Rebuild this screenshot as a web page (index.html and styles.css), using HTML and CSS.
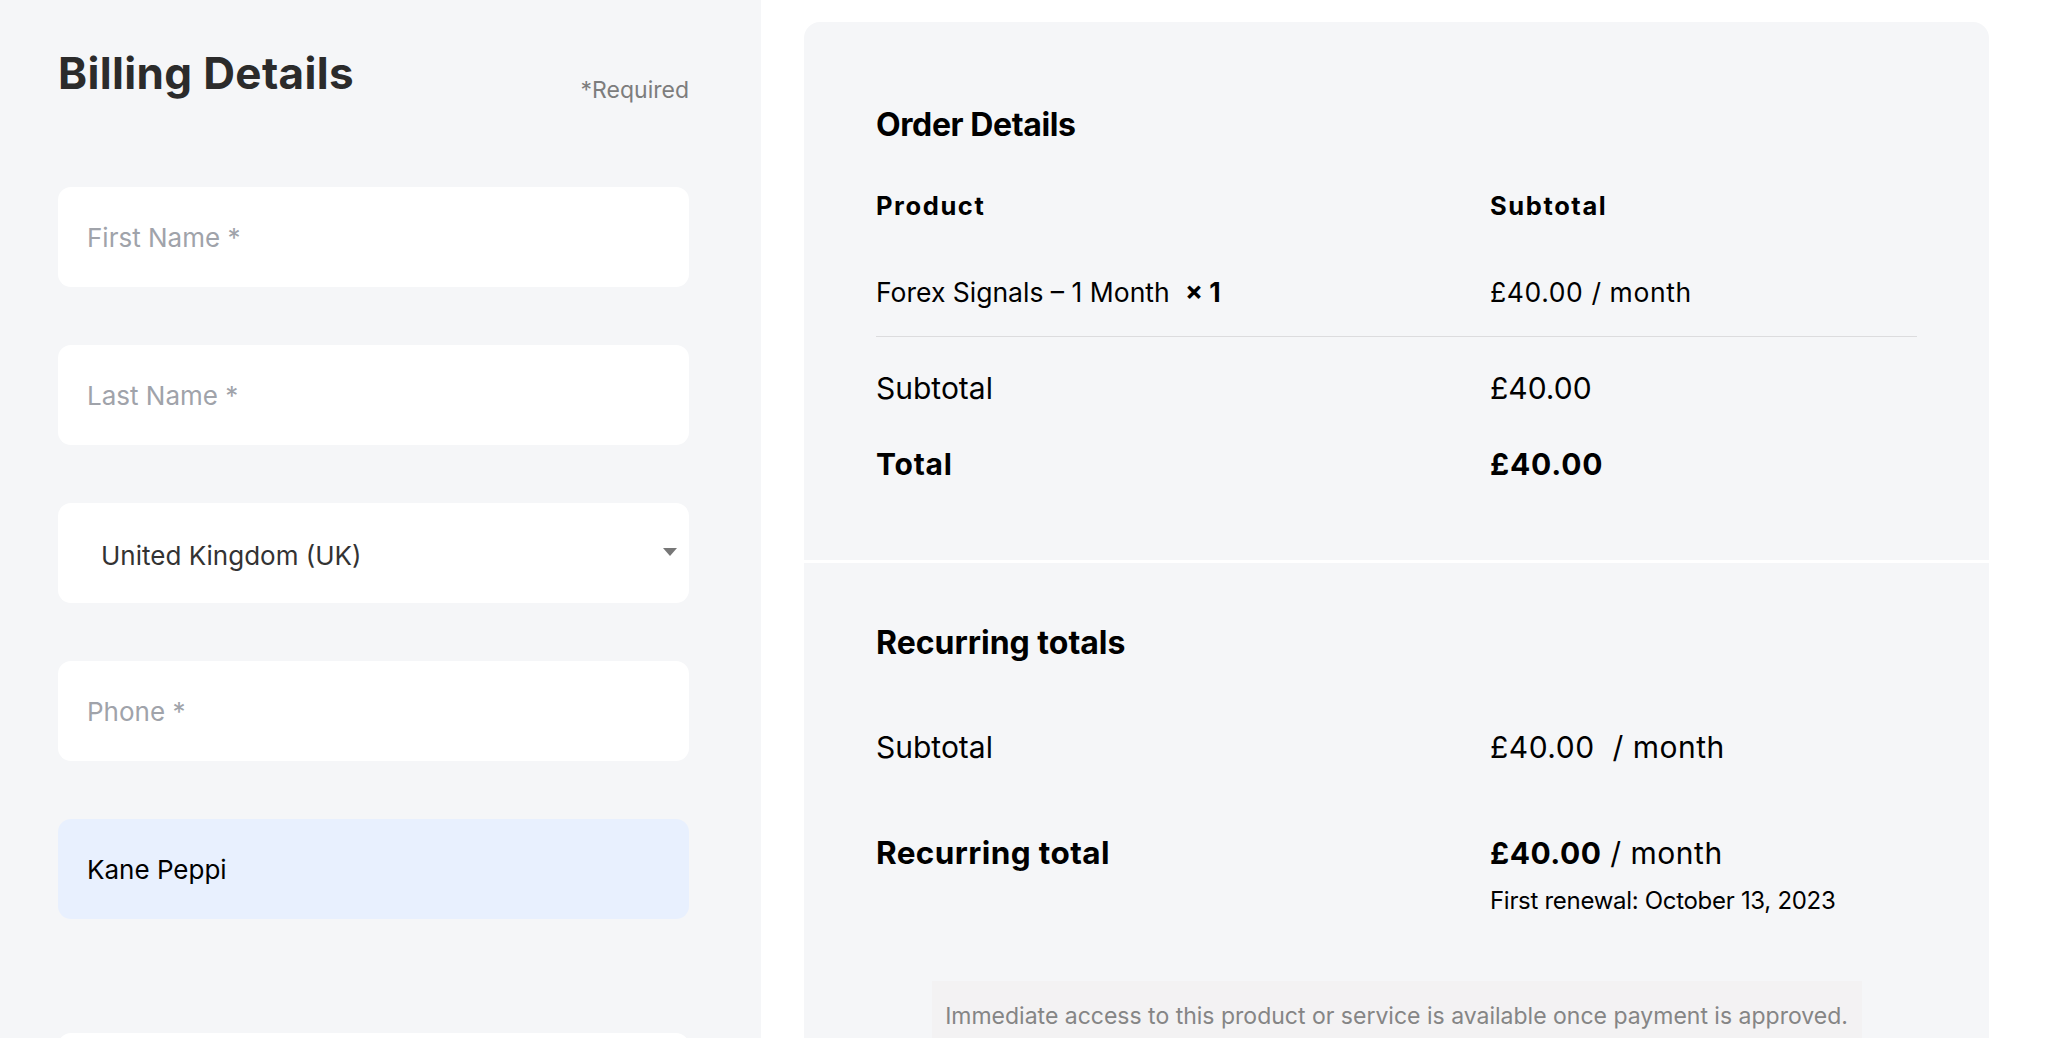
FILE: index.html
```html
<!DOCTYPE html>
<html lang="en">
<head>
<meta charset="utf-8">
<title>Checkout</title>
<link rel="stylesheet" href="styles.css">
</head>
<body>
<div class="page">
  <section class="billing">
    <header class="billing-head">
      <h2 class="billing-title">Billing Details</h2>
      <span class="required">*Required</span>
    </header>
    <div class="fields">
      <div class="field"><span class="placeholder">First Name *</span></div>
      <div class="field"><span class="placeholder">Last Name *</span></div>
      <div class="field field-select"><span class="select-value">United Kingdom (UK)</span><span class="caret"></span></div>
      <div class="field"><span class="placeholder">Phone *</span></div>
      <div class="field field-filled"><span class="value">Kane Peppi</span></div>
      <div class="field field-next"></div>
    </div>
  </section>

  <aside class="summary">
    <section class="panel panel-order">
      <h3 class="panel-title title-order">Order Details</h3>
      <div class="row row-head">
        <span>Product</span>
        <span>Subtotal</span>
      </div>
      <div class="row row-item">
        <span>Forex Signals – 1 Month <strong class="qty">×&nbsp;1</strong></span>
        <span class="item-price">£40.00 / month</span>
      </div>
      <div class="row row-sub">
        <span>Subtotal</span>
        <span>£40.00</span>
      </div>
      <div class="row row-total">
        <span>Total</span>
        <span>£40.00</span>
      </div>
    </section>
    <section class="panel panel-recurring">
      <h3 class="panel-title title-recurring">Recurring totals</h3>
      <div class="row row-rsub">
        <span>Subtotal</span>
        <span class="rsub-price">£40.00 &nbsp;/ month</span>
      </div>
      <div class="row row-rtotal">
        <span class="strong">Recurring total</span>
        <div class="rtotal-value">
          <span class="price"><strong>£40.00</strong> / month</span>
          <span class="renewal">First renewal: October 13, 2023</span>
        </div>
      </div>
      <p class="notice">Immediate access to this product or service is available once payment is approved.</p>
    </section>
  </aside>
</div>
</body>
</html>
```
FILE: styles.css
```css
* { box-sizing: border-box; }

html, body {
  margin: 0;
  padding: 0;
  background: #ffffff;
  height: 100%;
  overflow: hidden;
}

body {
  font-family: Inter, "Noto Sans", "Liberation Sans", sans-serif;
  color: #000;
}

.page {
  display: grid;
  grid-template-columns: 761px 1fr;
  min-height: 100vh;
}

/* ---------- Billing column ---------- */
.billing {
  background: #f5f6f8;
  padding: 47px 72px 0 58px;
}

.billing-head {
  display: flex;
  justify-content: space-between;
  align-items: flex-start;
  margin-bottom: 83px;
}

.billing-title {
  margin: 0;
  font-size: 44px;
  line-height: 53px;
  font-weight: 700;
  color: #2b2b2b;
  letter-spacing: 0.35px;
}

.required {
  margin-top: 29px;
  font-size: 23px;
  line-height: 28px;
  color: #7d7d7d;
}

.fields {
  display: flex;
  flex-direction: column;
  gap: 58px;
}

.field {
  position: relative;
  height: 100px;
  background: #ffffff;
  border-radius: 13px;
  display: flex;
  align-items: center;
  padding: 0 29px;
  font-size: 26px;
}

.placeholder { color: #a0a3aa; }

.field-select { padding: 5px 29px 0 43px; }
.select-value { color: #333333; }

.caret {
  position: absolute;
  right: 12px;
  top: 50%;
  margin-top: -5px;
  width: 0;
  height: 0;
  border-left: 7px solid transparent;
  border-right: 7px solid transparent;
  border-top: 8px solid #777777;
}

.field-filled { background: #e8f0fe; }
.value { color: #000; }

.field-next { margin-top: 56px; }

/* ---------- Summary card ---------- */
.summary {
  padding: 22px 67px 0 43px;
  display: flex;
  flex-direction: column;
  gap: 3px;
}

.panel {
  background: #f5f6f8;
  padding: 0 72px;
}

.panel-order {
  border-radius: 16px 16px 0 0;
  padding-top: 84px;
  padding-bottom: 78px;
}

.panel-recurring {
  padding-top: 61px;
  flex: 1;
}

.panel-title {
  margin: 0;
  font-size: 32px;
  line-height: 38px;
  font-weight: 700;
}

.title-order { letter-spacing: -0.4px; }
.title-recurring { letter-spacing: 0; }

.row {
  display: grid;
  grid-template-columns: 614px 1fr;
  align-items: start;
}

.row-head {
  margin-top: 47px;
  font-size: 25.5px;
  line-height: 30px;
  font-weight: 700;
  letter-spacing: 1.6px;
}

.row-item {
  margin-top: 55px;
  font-size: 26.5px;
  line-height: 32px;
  padding-bottom: 28px;
  border-bottom: 1px solid #dcdcde;
}

.item-price { letter-spacing: 0.6px; }

.qty {
  margin-left: 8px;
  font-weight: 700;
}

.row-sub {
  margin-top: 33px;
  font-size: 30px;
  line-height: 36px;
}

.row-total {
  margin-top: 40px;
  font-size: 30px;
  line-height: 36px;
  font-weight: 700;
  letter-spacing: 0.8px;
}

.row-rsub {
  margin-top: 67px;
  font-size: 30px;
  line-height: 36px;
}

.rsub-price { letter-spacing: 0.5px; }

.row-rtotal {
  margin-top: 70px;
  font-size: 30px;
  line-height: 36px;
}

.strong {
  font-weight: 700;
  font-size: 31.5px;
  letter-spacing: 0.4px;
}

.rtotal-value {
  display: flex;
  flex-direction: column;
}

.price { letter-spacing: 0.5px; }

.renewal {
  margin-top: 15px;
  font-size: 24px;
  line-height: 30px;
  letter-spacing: -0.3px;
}

.notice {
  margin: 65px auto 0;
  width: 930px;
  background: #f3f2f3;
  color: #858585;
  text-align: center;
  font-size: 23px;
  line-height: 28px;
  padding: 21px 10px 20px;
}
```
